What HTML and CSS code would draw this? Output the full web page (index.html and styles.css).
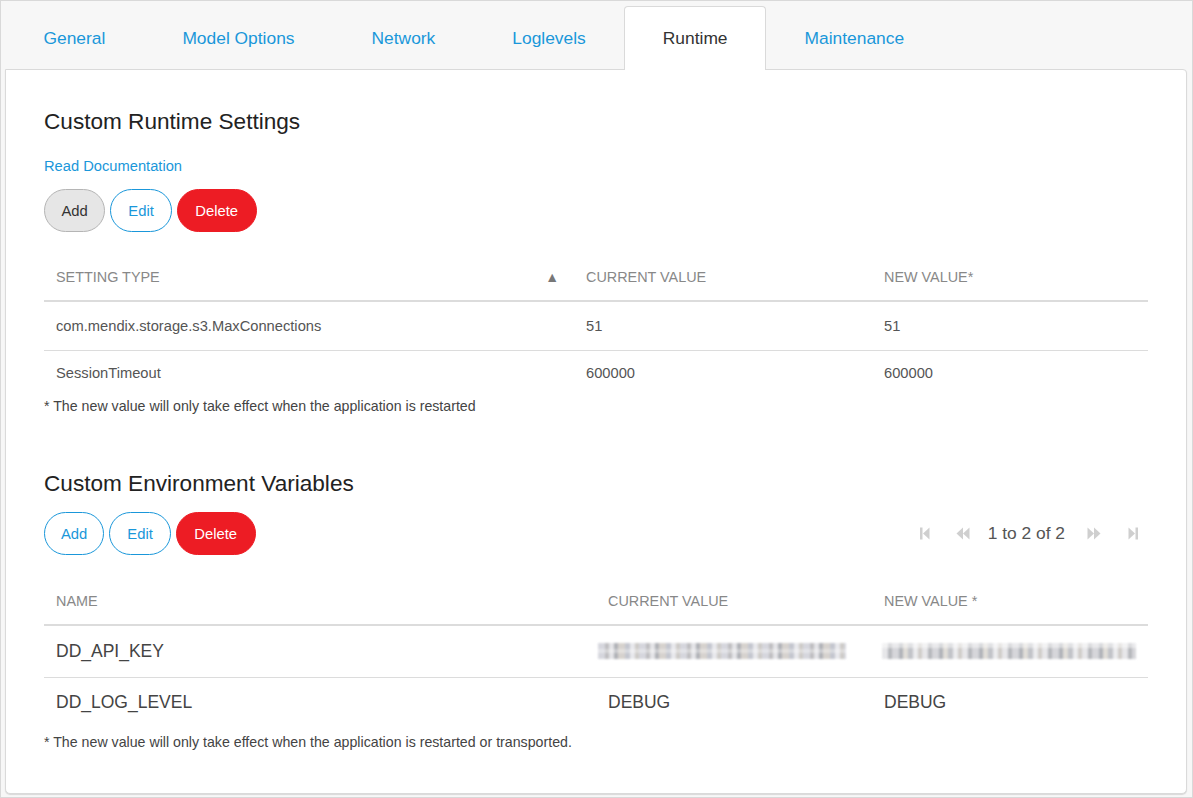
FILE: index.html
```html
<!DOCTYPE html>
<html>
<head>
<meta charset="utf-8">
<link rel="stylesheet" href="styles.css">
</head>
<body>
<div class="frame">
  <nav class="tabs">
    <a class="tab">General</a>
    <a class="tab">Model Options</a>
    <a class="tab">Network</a>
    <a class="tab">Loglevels</a>
    <a class="tab active">Runtime</a>
    <a class="tab">Maintenance</a>
  </nav>
  <main class="panel">
    <h2 class="title">Custom Runtime Settings</h2>
    <a class="doc-link">Read Documentation</a>
    <div class="toolbar toolbar-1">
      <div class="btns">
        <button class="btn btn-gray">Add</button>
        <button class="btn btn-outline">Edit</button>
        <button class="btn btn-red">Delete</button>
      </div>
    </div>
    <table class="grid grid-1">
      <colgroup><col class="c1a"><col class="c2a"><col></colgroup>
      <thead>
        <tr><th><span class="sort">&#9650;</span>Setting Type</th><th>Current Value</th><th>New Value*</th></tr>
      </thead>
      <tbody>
        <tr><td>com.mendix.storage.s3.MaxConnections</td><td>51</td><td>51</td></tr>
        <tr class="last"><td>SessionTimeout</td><td>600000</td><td>600000</td></tr>
      </tbody>
    </table>
    <p class="note">* The new value will only take effect when the application is restarted</p>

    <h2 class="title title-2">Custom Environment Variables</h2>
    <div class="toolbar toolbar-2">
      <div class="btns">
        <button class="btn btn-outline">Add</button>
        <button class="btn btn-outline">Edit</button>
        <button class="btn btn-red">Delete</button>
      </div>
      <div class="pager">
        <svg class="pg" width="12" height="13" viewBox="0 0 12 13"><rect x="1" y="0.5" width="2.5" height="12" fill="#cfcfcf"/><path d="M10.5 0.5 L4 6.5 L10.5 12.5 Z" fill="#cfcfcf"/></svg>
        <svg class="pg" width="16" height="13" viewBox="0 0 16 13"><path d="M8 0.5 L1.5 6.5 L8 12.5 Z" fill="#cfcfcf"/><path d="M14.5 0.5 L8 6.5 L14.5 12.5 Z" fill="#cfcfcf"/></svg>
        <span class="pg-text">1 to 2 of 2</span>
        <svg class="pg" width="16" height="13" viewBox="0 0 16 13"><path d="M1.5 0.5 L8 6.5 L1.5 12.5 Z" fill="#cfcfcf"/><path d="M8 0.5 L14.5 6.5 L8 12.5 Z" fill="#cfcfcf"/></svg>
        <svg class="pg" width="12" height="13" viewBox="0 0 12 13"><path d="M1.5 0.5 L8 6.5 L1.5 12.5 Z" fill="#cfcfcf"/><rect x="8.5" y="0.5" width="2.5" height="12" fill="#cfcfcf"/></svg>
      </div>
    </div>
    <table class="grid grid-2">
      <colgroup><col class="c1b"><col class="c2b"><col></colgroup>
      <thead>
        <tr><th>Name</th><th>Current Value</th><th>New Value *</th></tr>
      </thead>
      <tbody>
        <tr><td>DD_API_KEY</td><td><div class="blur blur-a"></div></td><td><div class="blur blur-b"></div></td></tr>
        <tr class="last"><td>DD_LOG_LEVEL</td><td>DEBUG</td><td>DEBUG</td></tr>
      </tbody>
    </table>
    <p class="note">* The new value will only take effect when the application is restarted or transported.</p>
  </main>
</div>
</body>
</html>
```

FILE: styles.css
```css
* { box-sizing: border-box; }
html, body { margin: 0; padding: 0; }
body {
  font-family: Arial, "Liberation Sans", Helvetica, sans-serif;
  color: #333;
  background: #f7f7f7;
}
.frame {
  width: 1193px;
  height: 798px;
  border: 1px solid #d9d9d9;
  background: #f7f7f7;
  padding: 5px 5px 0 4px;
}
.tabs {
  display: flex;
  height: 63px;
}
.tab {
  display: flex;
  align-items: center;
  padding: 1px 38.5px 0;
  font-size: 17.4px;
  color: #1a97da;
  height: 63px;
}
.tab.active {
  background: #fff;
  color: #333;
  border: 1px solid #dadada;
  border-bottom: none;
  border-radius: 4px 4px 0 0;
  height: 64px;
  margin-bottom: -1px;
  position: relative;
  z-index: 1;
  padding: 0 37.5px;
}
.panel {
  display: block;
  background: #fff;
  border: 1px solid #dadada;
  border-radius: 0 4px 5px 5px;
  box-shadow: 0 1px 1px rgba(0,0,0,0.12);
  height: 725px;
  padding: 39px 38px 0 38px;
}
.title {
  margin: 0;
  font-size: 22.6px;
  font-weight: normal;
  line-height: 26px;
  color: #222;
}
.title-2 { margin-top: 56px; }
.doc-link {
  display: block;
  margin-top: 21px;
  font-size: 14.7px;
  line-height: 20px;
  color: #1a97da;
}
.toolbar {
  display: flex;
  justify-content: space-between;
  align-items: center;
}
.toolbar-1 { margin-top: 13px; }
.toolbar-2 { margin-top: 15px; }
.btns { display: flex; gap: 5px; }
.btn {
  height: 43px;
  border-radius: 22px;
  font-family: Arial, "Liberation Sans", sans-serif;
  font-size: 14.8px;
  padding: 0 17px;
  border: 1px solid #1a97da;
  background: #fff;
  color: #1a97da;
}
.toolbar-2 .btn-outline:first-child { padding: 0 16px; }
.btn-gray {
  background: #e6e6e6;
  border-color: #b5b5b5;
  color: #333;
  padding: 0 16.5px;
}
.btn-red {
  background: #ed1c24;
  border-color: #ed1c24;
  color: #fff;
  padding: 0 17.5px;
}
.pager {
  display: flex;
  align-items: center;
  margin-right: 9px;
  color: #555;
}
.pg { display: block; }
.pager .pg:nth-child(1) { margin-right: 24px; }
.pager .pg:nth-child(2) { margin-right: 17px; }
.pg-text { font-size: 17.4px; margin-right: 21px; }
.pager .pg:nth-child(4) { margin-right: 25px; }

.grid {
  width: 1104px;
  border-collapse: collapse;
  table-layout: fixed;
}
.grid-1 { margin-top: 21px; }
.grid-2 { margin-top: 22px; }
.c1a { width: 530px; }
.c2a { width: 298px; }
.c1b { width: 552px; }
.c2b { width: 276px; }
.grid th {
  text-align: left;
  font-weight: normal;
  text-transform: uppercase;
  font-size: 14.4px;
  color: #888;
  height: 48px;
  padding: 0 12px;
  border-bottom: 2px solid #dcdcdc;
}
.sort {
  float: right;
  font-size: 14px;
  color: #777;
  margin-right: 3px;
}
.grid td {
  padding: 0 12px;
  border-bottom: 1px solid #dcdcdc;
  color: #555;
}
.grid-1 td { height: 49px; font-size: 14.7px; }
.grid-1 tr.last td { height: 46px; }
.grid-2 td { height: 51px; font-size: 17.5px; color: #444; }
.grid-2 tr:first-child td { height: 52px; }
.grid tr.last td { border-bottom: none; }
.note {
  margin: 1px 0 0;
  font-size: 14.2px;
  line-height: 18px;
  color: #444;
}
.grid-2 + .note { margin-top: 5px; }
.blur {
  height: 16px;
  filter: blur(0.8px);
  opacity: 0.85;
}
.blur-a {
  width: 248px;
  margin-left: -10px;
  background:
    linear-gradient(180deg, rgba(255,255,255,0) 0 6px, rgba(255,255,255,0.35) 6px 10px, rgba(255,255,255,0) 10px),
    repeating-linear-gradient(90deg, #cfd0d8 0 7px, #b4b3b6 7px 11px, #e0e0e4 11px 16px, #a3a5ab 16px 20px, #d0cbc6 20px 27px, #babdc7 27px 32px, #e5e5ea 32px 37px, #c5c2be 37px 41px);
}
.blur-b {
  width: 254px;
  margin-left: -2px;
  background:
    linear-gradient(180deg, rgba(255,255,255,0.5) 0 5px, rgba(255,255,255,0) 5px),
    repeating-linear-gradient(90deg, #e3e3e6 0 6px, #a9abb0 6px 10px, #cfcfd4 10px 17px, #a3a6ad 17px 21px, #dcd8d2 21px 26px, #b7b9bf 26px 31px, #e9e9ec 31px 36px, #c8c4c0 36px 40px);
}
```
